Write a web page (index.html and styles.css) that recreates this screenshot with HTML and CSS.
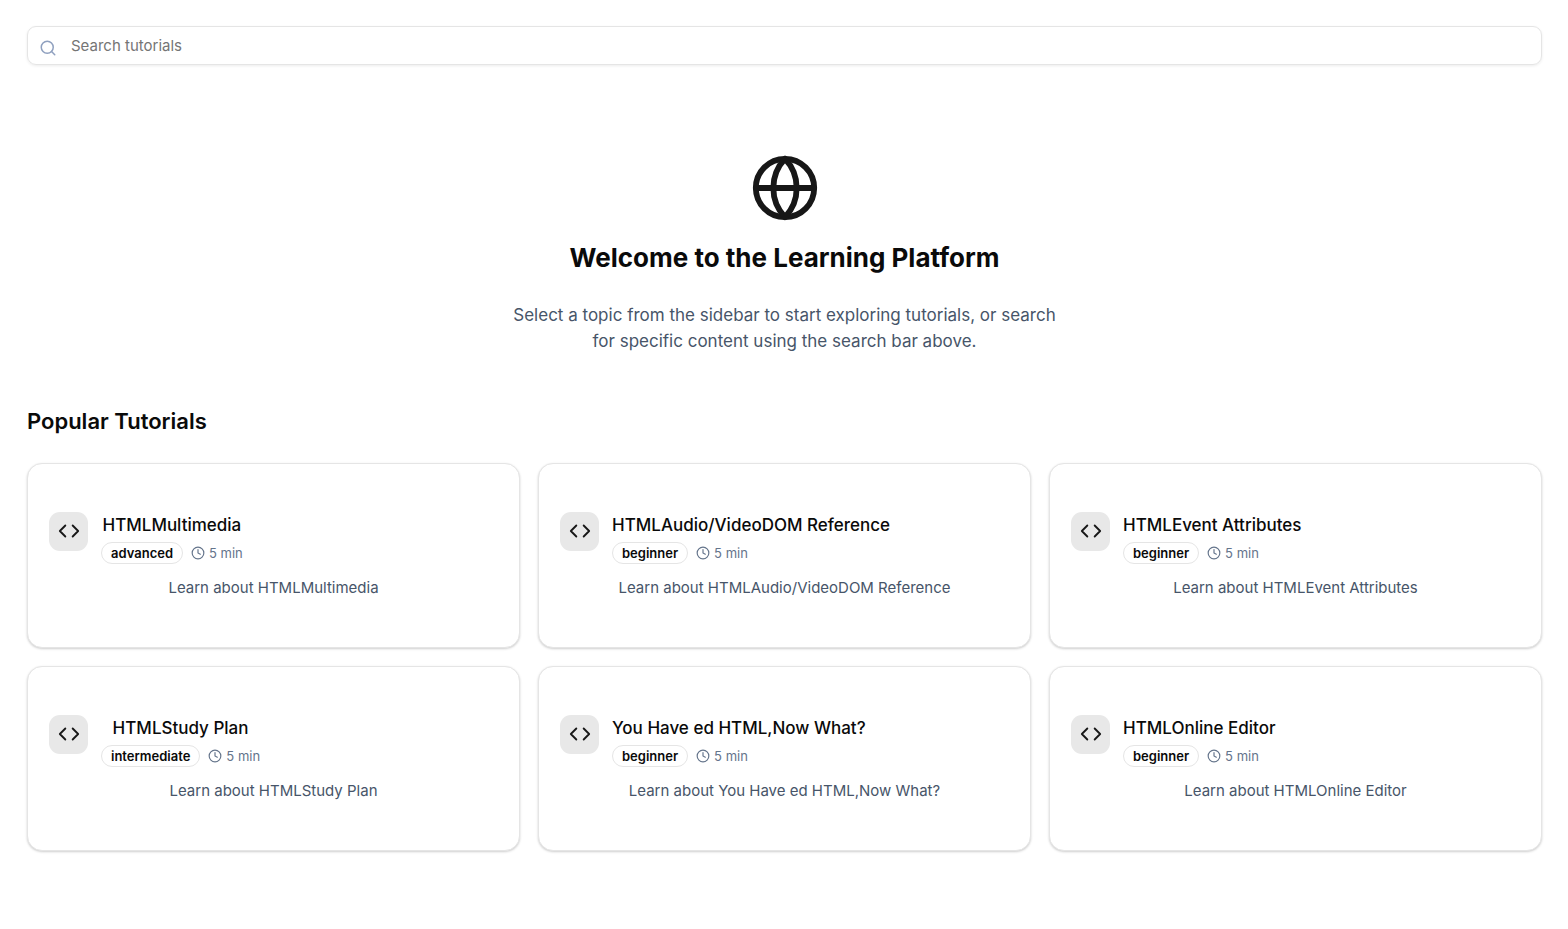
FILE: index.html
```html
<!DOCTYPE html>
<html lang="en">
<head>
<meta charset="utf-8">
<meta name="viewport" content="width=device-width, initial-scale=1">
<title>Learning Platform</title>
<link rel="stylesheet" href="styles.css">
</head>
<body>
<svg class="sprite" aria-hidden="true">
  <symbol id="code" viewBox="0 0 24 24"><path d="m16 18 6-6-6-6"/><path d="m8 6-6 6 6 6"/></symbol>
  <symbol id="clock" viewBox="0 0 24 24"><circle cx="12" cy="12" r="10"/><path d="M12 6v6l4 2"/></symbol>
</svg>
<main class="page">
  <form class="search" role="search">
    <label class="search-label" for="q" aria-label="Search tutorials">
      <svg class="icon search-icon" viewBox="0 0 24 24"><circle cx="11" cy="11" r="8"/><path d="m21 21-4.3-4.3"/></svg>
    </label>
    <input class="search-input" id="q" type="search" placeholder="Search tutorials">
  </form>

  <section class="hero">
    <svg class="icon hero-icon" viewBox="0 0 24 24" aria-hidden="true"><circle cx="12" cy="12" r="10"/><path d="M12 2a14.5 14.5 0 0 0 0 20 14.5 14.5 0 0 0 0-20"/><path d="M2 12h20"/></svg>
    <h1 class="hero-title">Welcome to the Learning Platform</h1>
    <p class="hero-text">Select a topic from the sidebar to start exploring tutorials, or search for specific content using the search bar above.</p>
  </section>

  <section>
    <h2 class="section-title">Popular Tutorials</h2>
    <div class="grid">
      <button class="card" type="button">
        <span class="card-head">
          <span class="tile"><svg class="icon tile-icon"><use href="#code"/></svg></span>
          <span class="card-info">
            <span class="card-title">HTMLMultimedia</span>
            <span class="meta"><span class="badge">advanced</span><span class="time"><svg class="icon clock"><use href="#clock"/></svg>5 min</span></span>
          </span>
        </span>
        <span class="card-text">Learn about HTMLMultimedia</span>
      </button>
      <button class="card" type="button">
        <span class="card-head">
          <span class="tile"><svg class="icon tile-icon"><use href="#code"/></svg></span>
          <span class="card-info">
            <span class="card-title">HTMLAudio/VideoDOM Reference</span>
            <span class="meta"><span class="badge">beginner</span><span class="time"><svg class="icon clock"><use href="#clock"/></svg>5 min</span></span>
          </span>
        </span>
        <span class="card-text">Learn about HTMLAudio/VideoDOM Reference</span>
      </button>
      <button class="card" type="button">
        <span class="card-head">
          <span class="tile"><svg class="icon tile-icon"><use href="#code"/></svg></span>
          <span class="card-info">
            <span class="card-title">HTMLEvent Attributes</span>
            <span class="meta"><span class="badge">beginner</span><span class="time"><svg class="icon clock"><use href="#clock"/></svg>5 min</span></span>
          </span>
        </span>
        <span class="card-text">Learn about HTMLEvent Attributes</span>
      </button>
      <button class="card" type="button">
        <span class="card-head">
          <span class="tile"><svg class="icon tile-icon"><use href="#code"/></svg></span>
          <span class="card-info">
            <span class="card-title">HTMLStudy Plan</span>
            <span class="meta"><span class="badge">intermediate</span><span class="time"><svg class="icon clock"><use href="#clock"/></svg>5 min</span></span>
          </span>
        </span>
        <span class="card-text">Learn about HTMLStudy Plan</span>
      </button>
      <button class="card" type="button">
        <span class="card-head">
          <span class="tile"><svg class="icon tile-icon"><use href="#code"/></svg></span>
          <span class="card-info">
            <span class="card-title">You Have ed HTML,Now What?</span>
            <span class="meta"><span class="badge">beginner</span><span class="time"><svg class="icon clock"><use href="#clock"/></svg>5 min</span></span>
          </span>
        </span>
        <span class="card-text">Learn about You Have ed HTML,Now What?</span>
      </button>
      <button class="card" type="button">
        <span class="card-head">
          <span class="tile"><svg class="icon tile-icon"><use href="#code"/></svg></span>
          <span class="card-info">
            <span class="card-title">HTMLOnline Editor</span>
            <span class="meta"><span class="badge">beginner</span><span class="time"><svg class="icon clock"><use href="#clock"/></svg>5 min</span></span>
          </span>
        </span>
        <span class="card-text">Learn about HTMLOnline Editor</span>
      </button>
    </div>
  </section>
</main>
</body>
</html>
```
FILE: styles.css
```css
* {
  box-sizing: border-box;
}

body {
  margin: 0;
  background: #fff;
  color: #0a0a0a;
  font-family: Inter, "Liberation Sans", sans-serif;
}

.sprite {
  display: none;
}

.icon {
  display: block;
  flex: none;
  fill: none;
  stroke: currentColor;
  stroke-width: 2;
  stroke-linecap: round;
  stroke-linejoin: round;
}

.page {
  padding: 26px 26px 26px 27px;
}

.search {
  display: flex;
  align-items: center;
  gap: 14px;
  padding: 0 11px;
  border: 1px solid #e5e5e5;
  border-radius: 9px;
  box-shadow: 0 1px 3px rgba(0, 0, 0, 0.08);
}

.search-label {
  padding-top: 4px;
  color: #8fa0bf;
}

.search-icon {
  width: 18px;
  height: 18px;
}

.search-input {
  flex: 1;
  min-width: 0;
  height: 37px;
  padding: 0;
  border: 0;
  outline: 0;
  background: none;
  font: 400 15px/22px Inter, "Liberation Sans", sans-serif;
}

.search-input::placeholder {
  color: #757575;
}

.hero {
  display: flex;
  flex-direction: column;
  align-items: center;
  padding: 88px 0 52px;
  text-align: center;
}

.hero-icon {
  width: 70px;
  height: 70px;
  color: #171717;
}

.hero-title {
  margin: 17px 0 27px;
  font-size: 26px;
  line-height: 35px;
  font-weight: 700;
}

.hero-text {
  max-width: 563px;
  margin: 0;
  color: #475569;
  font-size: 17px;
  line-height: 26px;
}

.section-title {
  margin: 0 0 26px;
  font-size: 22px;
  line-height: 31px;
  font-weight: 600;
}

.grid {
  display: grid;
  grid-template-columns: repeat(3, minmax(0, 1fr));
  gap: 18px;
}

.card {
  display: flex;
  flex-direction: column;
  gap: 12px;
  padding: 48px 21px 47px;
  border: 1px solid #e5e5e5;
  border-radius: 15px;
  background: #fff;
  box-shadow: 0 1px 3px rgba(0, 0, 0, 0.1), 0 1px 2px rgba(0, 0, 0, 0.1);
  color: inherit;
  font-family: inherit;
  text-align: center;
}

.card-head {
  display: flex;
  align-items: flex-start;
  gap: 13px;
}

.tile {
  display: flex;
  flex: none;
  justify-content: center;
  padding: 8px 0 9px;
  width: 39px;
  border-radius: 11px;
  background: #e8e8e8;
  color: #171717;
}

.tile-icon {
  width: 22px;
  height: 22px;
}

.card-info {
  display: flex;
  flex-direction: column;
  gap: 4px;
}

.card-title {
  font-size: 17px;
  line-height: 26px;
  font-weight: 500;
}

.meta {
  display: flex;
  align-items: center;
  gap: 8px;
}

.badge {
  padding: 0 9px;
  border: 1px solid #e5e5e5;
  border-radius: 11px;
  font-size: 13px;
  line-height: 20px;
  font-weight: 600;
}

.time {
  display: flex;
  align-items: center;
  gap: 4px;
  color: #64748b;
  font-size: 13px;
  line-height: 20px;
}

.clock {
  width: 14px;
  height: 14px;
}

.card-text {
  color: #475569;
  font-size: 15px;
  line-height: 24px;
}
```
